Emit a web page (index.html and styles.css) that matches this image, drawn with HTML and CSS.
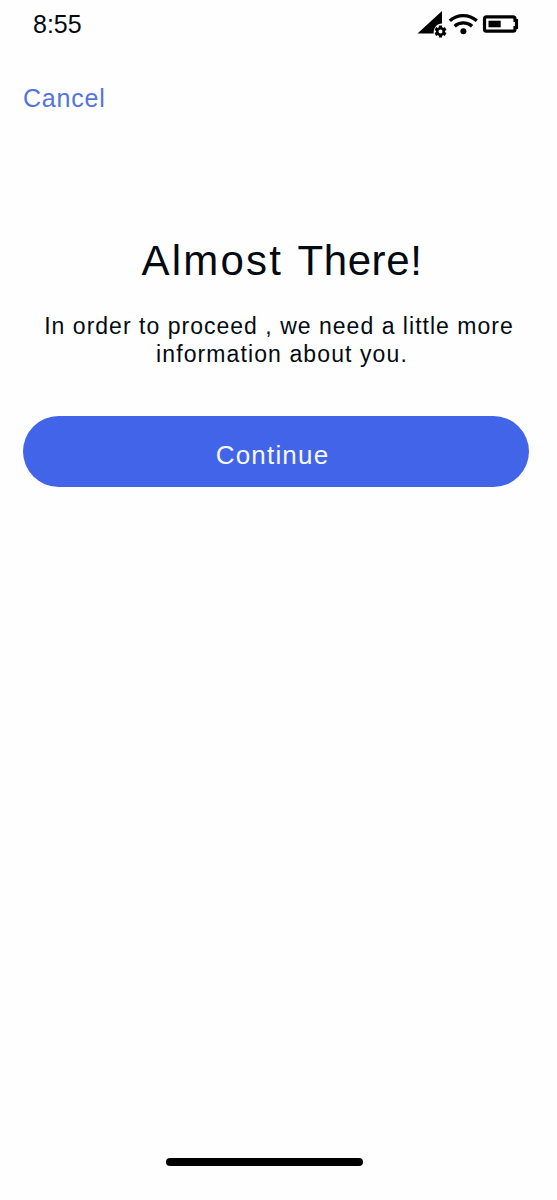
FILE: index.html
```html
<!DOCTYPE html>
<html lang="en">
<head>
<meta charset="utf-8">
<title>Almost There!</title>
<link rel="stylesheet" href="styles.css">
</head>
<body>
<div class="screen">
  <header class="status">
    <span class="time">8:55</span>
    <svg class="status-icons" width="102" height="30" viewBox="417 9 102 30" aria-hidden="true">
      <path d="M417.5 33.500 442 11v12.600c-5 0-8.600 4-8.300 9.900z"/>
      <g transform="translate(440.5 31.5)">
        <g stroke="#000" stroke-width="3.2">
          <path d="M0-6V-3M0 6V3M-5.2-3-2.6-1.5M5.2 3 2.6 1.5M-5.2 3-2.6 1.5M5.2-3 2.6-1.5"/>
        </g>
        <circle r="3.3" fill="none" stroke="#000" stroke-width="2.6"/>
      </g>
      <g fill="none" stroke="#000" stroke-width="3.3">
        <path d="M449.8 20.8c7.5-7 19.3-7 27 0M454.6 26.200c4.800-4.400 12.700-4.400 17.500 0"/>
      </g>
      <circle cx="463.4" cy="31.3" r="3"/>
      <path fill="none" stroke="#000" stroke-width="3.2" d="M486.500 16.800h26.500q2 0 2 2v1.700h1.500v7h-1.500v1.700q0 2-2 2h-26.500q-2 0-2-2V18.800q0-2 2-2z"/>
      <path d="M488.500 20.700h12.200v6.600h-12.200z"/>
    </svg>
  </header>
  <nav class="nav"><a class="cancel">Cancel</a></nav>
  <main class="content">
    <h1 class="title"><span class="title-lead">Almost</span> <span class="title-end">There!</span></h1>
    <p class="message"><span class="message-first">In order to proceed , we need a little more</span><br>information about you.</p>
    <button class="continue">Continue</button>
  </main>
  <div class="home"></div>
</div>
</body>
</html>
```
FILE: styles.css
```css
* { box-sizing: border-box; }
body {
  margin: 0;
  background: #fefefe;
  color: #030b12;
  font-family: "Liberation Sans", Arial, sans-serif;
}
.screen {
  display: flex;
  flex-direction: column;
  width: 557px;
  height: 1200px;
  overflow: hidden;
}
.status {
  display: flex;
  justify-content: space-between;
  height: 48px;
  padding: 9px 38px 0 33px;
}
.time { font-size: 25px; line-height: 30px; }
.nav { height: 187px; padding: 35px 23px 0; }
.cancel {
  display: block;
  color: #5474dc;
  font-size: 25px;
  line-height: 30px;
  letter-spacing: 0.8px;
}
.content { flex: 1; padding: 0 28px 0 23px; }
.title {
  margin: 0 0 25px 12px;
  font-size: 42px;
  font-weight: 400;
  line-height: 52px;
  letter-spacing: 1.6px;
  text-align: center;
}
.title-lead { letter-spacing: 2.2px; }
.title-end { margin-left: 1px; letter-spacing: 0.6px; }
.message {
  margin: 0 -20px 48px -8px;
  font-size: 23px;
  line-height: 28px;
  letter-spacing: 1.1px;
  text-align: center;
}
.message-first { margin-right: 6px; letter-spacing: 1.02px; }
.continue {
  display: block;
  width: 506px;
  height: 71px;
  padding: 8px 7px 0 0;
  border: 0;
  border-radius: 36px;
  background: #4264e8;
  color: #f5f8ff;
  font: 26px "Liberation Sans", Arial, sans-serif;
  letter-spacing: 1.2px;
}
.home {
  width: 197px;
  height: 8px;
  margin: 0 0 34px 166px;
  border-radius: 4px;
  background: #000;
}
```
